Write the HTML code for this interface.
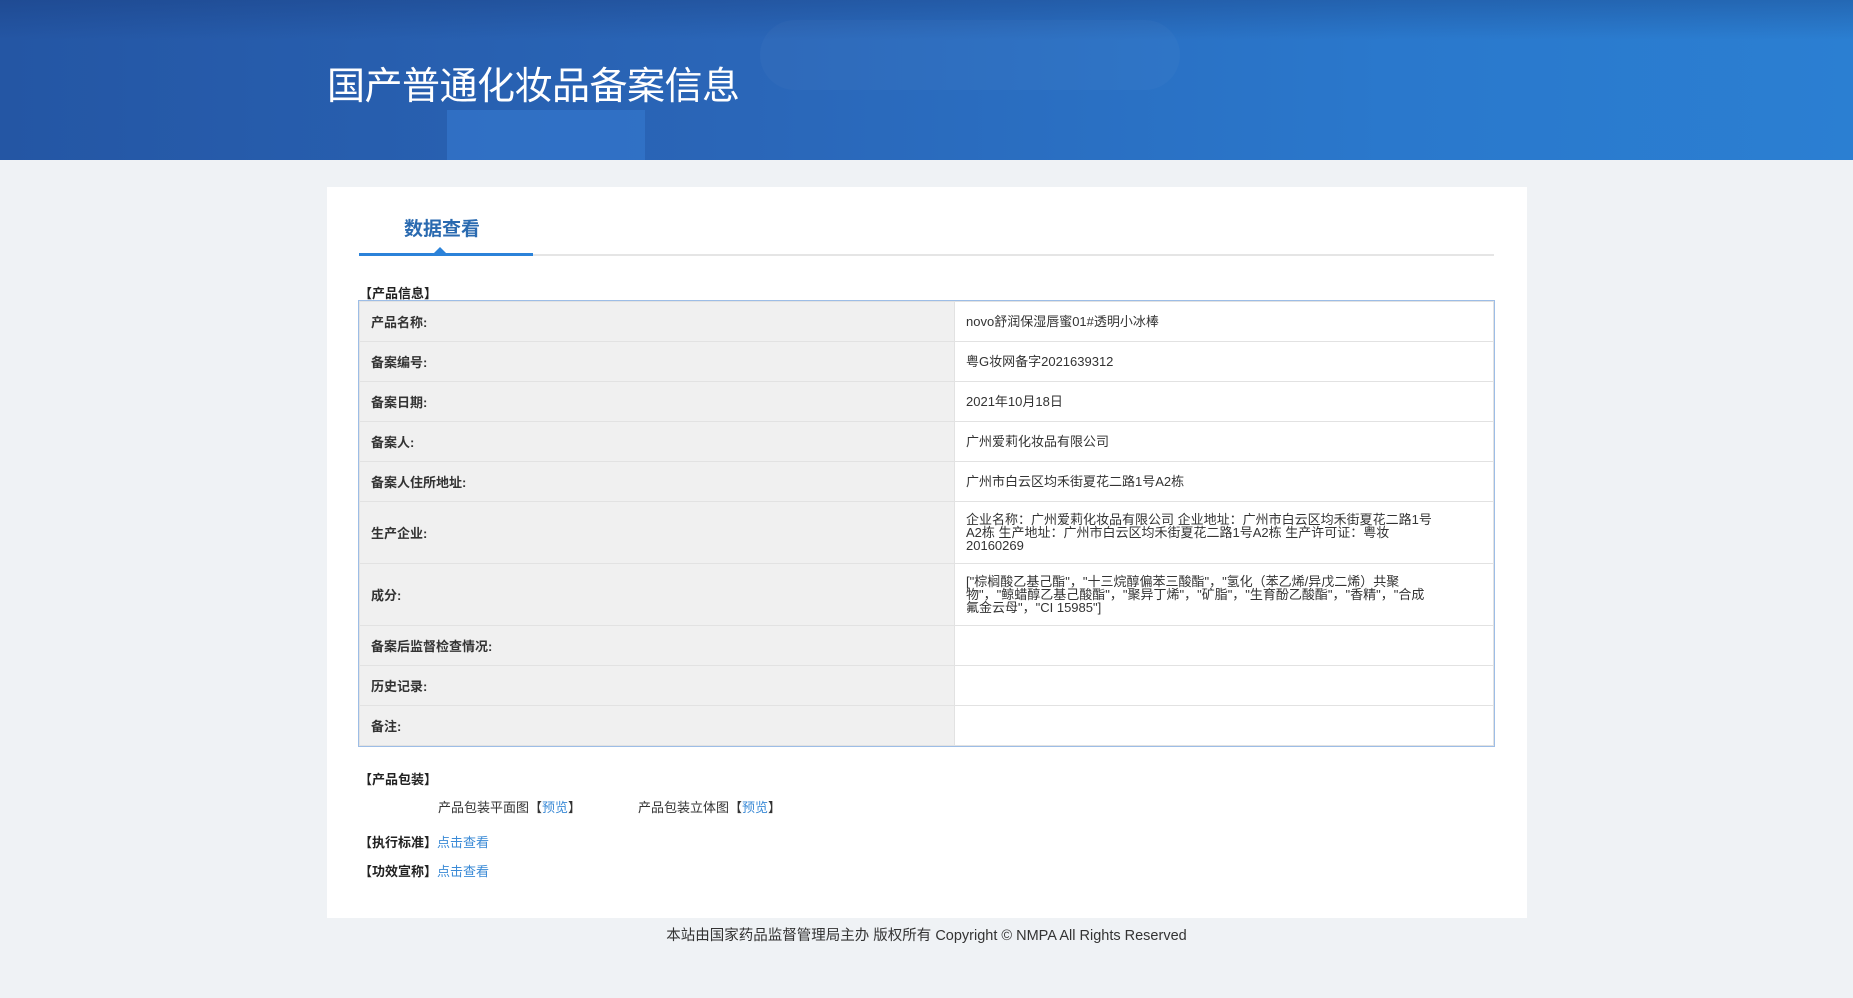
<!DOCTYPE html>
<html><head><meta charset="utf-8"><style>
*{margin:0;padding:0;box-sizing:border-box}
body{width:1853px;height:998px;background:#eff2f5;font-family:"Liberation Sans","Noto Sans CJK SC",sans-serif;color:#333;position:relative;overflow:hidden}
.hdr{position:absolute;left:0;top:0;width:1853px;height:160px;background:linear-gradient(90deg,#2456a4 0%,#2a66b8 40%,#2a78cc 75%,#2b7fd2 100%);overflow:hidden}
.hdr .b1{position:absolute;left:447px;top:110px;width:198px;height:50px;background:#3679d0;opacity:.6}
.hdr .b2{position:absolute;left:760px;top:20px;width:420px;height:70px;border-radius:40px;background:rgba(255,255,255,.025)}
.hdr .b3{position:absolute;left:0;top:0;width:1853px;height:40px;background:linear-gradient(180deg,rgba(20,50,110,.3),rgba(0,0,0,0))}
.hdr h1{position:absolute;left:327px;top:64px;font-size:38px;font-weight:normal;color:#fff;letter-spacing:-0.5px;line-height:46px}
.card{position:absolute;left:327px;top:187px;width:1200px;height:731px;background:#fff}
.tab{position:absolute;left:404px;top:214px;font-size:19px;font-weight:bold;color:#2a6ab0}
.ln{position:absolute;left:359px;top:254px;width:1135px;height:2px;background:#e5e5e5}
.ln2{position:absolute;left:359px;top:253px;width:174px;height:3px;background:#2b82d9}
.tri{position:absolute;left:434px;top:247px;width:0;height:0;border-left:6px solid transparent;border-right:6px solid transparent;border-bottom:6px solid #2b82d9}
.sec{position:absolute;font-size:13px;font-weight:bold;color:#222}
table{position:absolute;left:359px;top:301px;width:1135px;border-collapse:collapse;box-shadow:0 0 0 1px #9dbde6;font-size:13px}
td{border:1px solid #e2e2e2;height:40px;vertical-align:middle}
td.k{width:595px;background:#f0f0f0;font-weight:bold;padding-left:11px;color:#333}
td.v{padding:0 46px 0 11px;line-height:13px;color:#333}
tr.t td{height:62px}
.txt{position:absolute;font-size:13px;color:#333}
a{color:#3a8ad6;text-decoration:none}
.foot{position:absolute;left:0;width:1853px;top:924px;text-align:center;font-size:14.5px;color:#333}
</style></head><body>
<div class="hdr"><div class="b3"></div><div class="b2"></div><div class="b1"></div><h1>国产普通化妆品备案信息</h1></div>
<div class="card"></div>
<div class="tab">数据查看</div>
<div class="ln"></div><div class="ln2"></div><div class="tri"></div>
<div class="sec" style="left:359px;top:283px">【产品信息】</div>
<table>
<tr><td class="k">产品名称:</td><td class="v">novo舒润保湿唇蜜01#透明小冰棒</td></tr>
<tr><td class="k">备案编号:</td><td class="v">粤G妆网备字2021639312</td></tr>
<tr><td class="k">备案日期:</td><td class="v">2021年10月18日</td></tr>
<tr><td class="k">备案人:</td><td class="v">广州爱莉化妆品有限公司</td></tr>
<tr><td class="k">备案人住所地址:</td><td class="v">广州市白云区均禾街夏花二路1号A2栋</td></tr>
<tr class="t"><td class="k">生产企业:</td><td class="v">企业名称：广州爱莉化妆品有限公司 企业地址：广州市白云区均禾街夏花二路1号<br>A2栋 生产地址：广州市白云区均禾街夏花二路1号A2栋 生产许可证：粤妆<br>20160269</td></tr>
<tr class="t"><td class="k">成分:</td><td class="v">["棕榈酸乙基己酯"，"十三烷醇偏苯三酸酯"，"氢化（苯乙烯/异戊二烯）共聚<br>物"，"鲸蜡醇乙基己酸酯"，"聚异丁烯"，"矿脂"，"生育酚乙酸酯"，"香精"，"合成<br>氟金云母"，"CI 15985"]</td></tr>
<tr><td class="k">备案后监督检查情况:</td><td class="v"></td></tr>
<tr><td class="k">历史记录:</td><td class="v"></td></tr>
<tr><td class="k">备注:</td><td class="v"></td></tr>
</table>
<div class="sec" style="left:359px;top:769px">【产品包装】</div>
<div class="txt" style="left:438px;top:797px">产品包装平面图【<a>预览</a>】</div>
<div class="txt" style="left:638px;top:797px">产品包装立体图【<a>预览</a>】</div>
<div class="sec" style="left:359px;top:832px">【执行标准】<a style="font-weight:normal">点击查看</a></div>
<div class="sec" style="left:359px;top:861px">【功效宣称】<a style="font-weight:normal">点击查看</a></div>
<div class="foot">本站由国家药品监督管理局主办 版权所有 Copyright © NMPA All Rights Reserved</div>
</body></html>
